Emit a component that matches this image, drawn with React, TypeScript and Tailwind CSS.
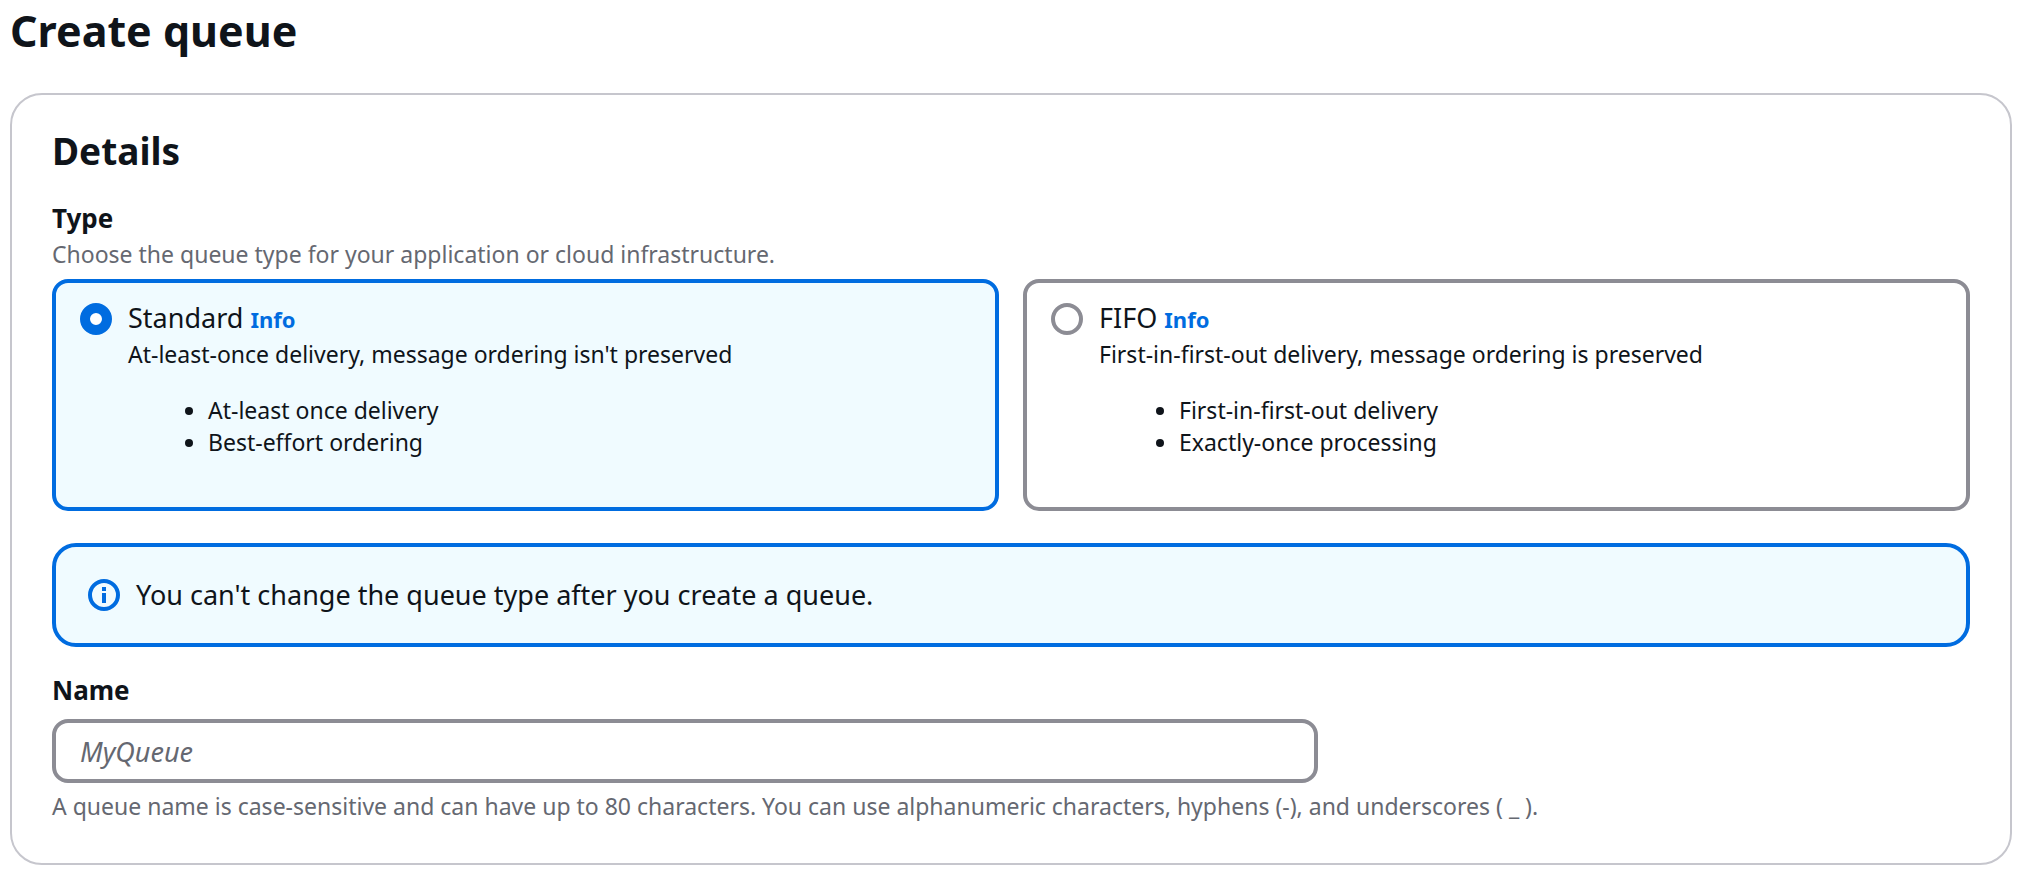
import React, { useState } from "react";

type QueueType = {
  id: string;
  title: string;
  description: string;
  features: string[];
};

const queueTypes: QueueType[] = [
  {
    id: "standard",
    title: "Standard",
    description: "At-least-once delivery, message ordering isn't preserved",
    features: ["At-least once delivery", "Best-effort ordering"],
  },
  {
    id: "fifo",
    title: "FIFO",
    description: "First-in-first-out delivery, message ordering is preserved",
    features: ["First-in-first-out delivery", "Exactly-once processing"],
  },
];

function InfoIcon() {
  return (
    <svg className="size-8 shrink-0" viewBox="0 0 32 32" fill="none" aria-hidden="true">
      <circle cx="16" cy="16" r="14" stroke="#006ce0" strokeWidth="4" />
      <path d="M14 8h4v4h-4zM14 14h4v10h-4z" fill="#006ce0" />
    </svg>
  );
}

function TypeTile({
  type,
  checked,
  onSelect,
}: {
  type: QueueType;
  checked: boolean;
  onSelect: () => void;
}) {
  return (
    <div
      className={
        "flex gap-4 rounded-2xl border-4 px-6 pt-[15px] pb-[49px] " +
        (checked ? "border-[#006ce0] bg-[#f0fbff]" : "border-[#8c8c94] bg-white")
      }
    >
      <input
        id={type.id}
        type="radio"
        name="queue-type"
        checked={checked}
        onChange={onSelect}
        aria-describedby={type.id + "-description"}
        className="mt-[5px] size-8 shrink-0 appearance-none rounded-full border-4 border-[#8c8c94] bg-white checked:border-10 checked:border-[#006ce0]"
      />
      <div className="min-w-0 flex-1">
        <div className="text-[27px] leading-10">
          <label htmlFor={type.id}>{type.title}</label>{" "}
          <a href="#info" className="text-[22px] leading-8 font-bold text-[#006ce0]">
            Info
          </a>
        </div>
        <div id={type.id + "-description"} className="text-[23px] leading-8">
          <p>{type.description}</p>
          <ul className="mt-6 list-disc pl-20">
            {type.features.map((feature) => (
              <li key={feature}>{feature}</li>
            ))}
          </ul>
        </div>
      </div>
    </div>
  );
}

export default function App() {
  const [selected, setSelected] = useState("standard");
  const [name, setName] = useState("");

  return (
    <main className="bg-white px-[10px] pb-[7px] font-['Noto_Sans','Open_Sans',sans-serif] text-[#0f141a]">
      <h1 className="text-[43px] leading-[62px] font-bold">Create queue</h1>

      <section className="mt-[31px] rounded-[32px] border-2 border-[#c6c6cd] px-10 pt-8 pb-[41px]">
        <h2 className="text-[37px] leading-[48px] font-bold">Details</h2>

        <fieldset className="mt-[23px]">
          <legend className="text-[26px] leading-10 font-bold">Type</legend>
          <p className="text-[23px] leading-8 text-[#656871]">
            Choose the queue type for your application or cloud infrastructure.
          </p>
          <div className="mt-[9px] grid grid-cols-2 gap-6">
            {queueTypes.map((type) => (
              <TypeTile
                key={type.id}
                type={type}
                checked={selected === type.id}
                onSelect={() => setSelected(type.id)}
              />
            ))}
          </div>
        </fieldset>

        <div className="mt-8 flex items-center gap-4 rounded-3xl border-4 border-[#006ce0] bg-[#f0fbff] px-8 py-7">
          <InfoIcon />
          <p className="text-[27px] leading-10">
            You can't change the queue type after you create a queue.
          </p>
        </div>

        <div className="mt-[23px]">
          <label htmlFor="queue-name" className="block text-[26px] leading-10 font-bold">
            Name
          </label>
          <input
            id="queue-name"
            type="text"
            value={name}
            onChange={(event) => setName(event.target.value)}
            placeholder="MyQueue"
            aria-describedby="queue-name-help"
            className="mt-[9px] block h-16 w-[66%] rounded-2xl border-4 border-[#8c8c94] bg-white px-6 text-[27px] placeholder:text-[#656871] placeholder:italic"
          />
          <p id="queue-name-help" className="mt-[7px] text-[23px] leading-8 text-[#656871]">
            A queue name is case-sensitive and can have up to 80 characters. You can use
            alphanumeric characters, hyphens (-), and underscores ( _ ).
          </p>
        </div>
      </section>
    </main>
  );
}
